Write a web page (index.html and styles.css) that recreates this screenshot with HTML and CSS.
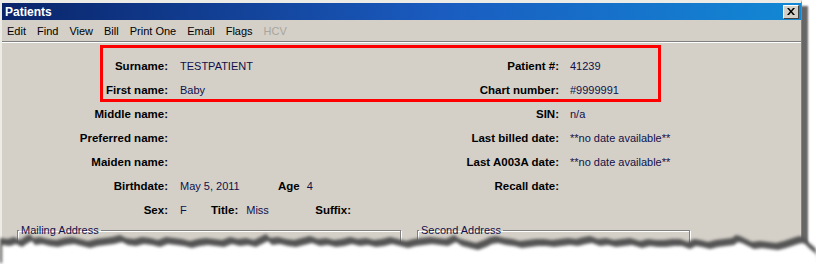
FILE: index.html
```html
<!DOCTYPE html>
<html lang="en">
<head>
    <meta charset="UTF-8">
    <title>Patients</title>
    <link rel="stylesheet" href="styles.css">
</head>
<body>
    <div class="window">
        <div class="titlebar">
            <span class="title">Patients</span>
            <span class="close">
                <svg width="8" height="7" viewBox="0 0 8 7"><path d="M0 0h2l2 2.5L6 0h2L5 3.5 8 7H6L4 4.5 2 7H0l3-3.5z" fill="#000"/></svg>
            </span>
        </div>
        <div class="menubar">
            <span>Edit</span>
            <span>Find</span>
            <span>View</span>
            <span>Bill</span>
            <span>Print One</span>
            <span>Email</span>
            <span>Flags</span>
            <span class="disabled">HCV</span>
        </div>
        <div class="content">
            <div class="fields">
                <span class="label">Surname:</span>
                <span class="value">TESTPATIENT</span>
                <span class="label">Patient #:</span>
                <span class="value right">41239</span>

                <span class="label">First name:</span>
                <span class="value">Baby</span>
                <span class="label">Chart number:</span>
                <span class="value right">#9999991</span>

                <span class="label">Middle name:</span>
                <span class="value"></span>
                <span class="label">SIN:</span>
                <span class="value right">n/a</span>

                <span class="label">Preferred name:</span>
                <span class="value"></span>
                <span class="label">Last billed date:</span>
                <span class="value right">**no date available**</span>

                <span class="label">Maiden name:</span>
                <span class="value"></span>
                <span class="label">Last A003A date:</span>
                <span class="value right">**no date available**</span>

                <span class="label">Birthdate:</span>
                <span class="value"><span class="birth">May 5, 2011</span><b>Age</b><span class="age">4</span></span>
                <span class="label">Recall date:</span>
                <span class="value right"></span>

                <span class="label">Sex:</span>
                <span class="value"><span class="sex">F</span><b>Title:</b><span class="miss">Miss</span><b>Suffix:</b></span>
                <span class="label"></span>
                <span class="value right"></span>
            </div>
            <div class="groups">
                <fieldset class="group mailing"><legend>Mailing Address</legend></fieldset>
                <fieldset class="group second"><legend>Second Address</legend></fieldset>
            </div>
        </div>
        <div class="highlight"></div>
    </div>

    <!-- torn paper edge -->
    <svg class="torn" width="816" height="264" viewBox="0 0 816 264">
        <defs>
            <filter id="soft" x="-5%" y="-50%" width="110%" height="200%">
                <feGaussianBlur stdDeviation="1.6"/>
            </filter>
            <path id="edge" d="M0 239L8 240L14 238L20 241L26 237L30 235L33 239L40 238L48 240L56 241L64 239L72 238L80 240L88 242L96 240L104 239L112 238L120 236L126 239L134 240L142 238L150 239L158 241L166 238L174 239L182 240L190 242L198 240L206 239L214 240L222 241L230 238L238 240L246 239L254 241L262 237L266 235L270 239L278 238L286 240L294 241L302 239L310 237L318 240L326 239L334 241L342 240L350 238L358 240L366 239L374 241L382 240L390 238L398 240L406 242L414 240L422 239L430 238L438 239L446 240L454 236L460 240L468 242L476 244L484 241L490 238L496 237L504 239L512 240L520 242L528 241L536 240L544 240L552 241L560 240L568 239L576 240L584 238L590 237L598 240L606 239L614 241L622 240L630 239L640 242L648 240L656 241L664 241L672 240L680 240L688 243L694 240L700 241L708 243L716 241L724 240L732 239L736 236L740 237L746 240L752 243L760 242L768 243L776 244L784 242L790 240L796 238L800 237L803 238L808 243L812 246L816 250L816 264L0 264Z"/>
        </defs>
        <use href="#edge" fill="#555555" filter="url(#soft)" transform="translate(0 -1)"/>
        <use href="#edge" fill="#ffffff" filter="url(#soft)" transform="translate(2 6)"/>
    </svg>
</body>
</html>
```

FILE: styles.css
```css
html, body {
    margin: 0;
    padding: 0;
    background-color: #fff;
    overflow: hidden;
}
body {
    width: 816px;
    height: 264px;
    position: relative;
    font-family: "Liberation Sans", Arial, sans-serif;
    font-size: 11px;
    color: #000;
}
.window {
    position: relative;
    width: 799px;
    height: 256px;
    overflow: hidden;
    border-top: 3px solid #ecebe6;
    border-left: 2px solid #ecebe6;
    border-right: 1px solid #808080;
    background-color: #d4d0c8;
    box-shadow: 6px 6px 2px #666;
}
.titlebar {
    height: 17px;
    display: flex;
    align-items: center;
    justify-content: space-between;
    padding: 0 2px 0 3px;
    background: linear-gradient(to right, #0a246a, #1a5cc0 55%, #1288d4);
}
.title {
    color: #fff;
    font-weight: bold;
    font-size: 12px;
}
.close {
    width: 14px;
    height: 12px;
    display: flex;
    align-items: center;
    justify-content: center;
    background-color: #d4d0c8;
    border-top: 1px solid #fff;
    border-left: 1px solid #fff;
    border-right: 1px solid #404040;
    border-bottom: 1px solid #404040;
}
.menubar {
    height: 21px;
    display: flex;
    align-items: center;
    gap: 11px;
    padding-left: 5px;
    border-bottom: 1px solid #808080;
    box-shadow: 0 1px 0 #fff;
}
.menubar .disabled {
    color: #a8a59c;
}
.content {
    padding-top: 12px;
}
.fields {
    display: grid;
    grid-template-columns: 166px 212px 179px 1fr;
    grid-auto-rows: 24px;
    align-items: center;
}
.label {
    text-align: right;
    font-weight: bold;
    font-size: 11.5px;
}
.value {
    padding-left: 12px;
    color: #10104a;
    display: flex;
    align-items: center;
}
.value.right {
    padding-left: 11px;
}
.value b {
    color: #000;
    font-size: 11.5px;
}
.birth {
    width: 98px;
}
.age {
    margin-left: 7px;
}
.sex {
    width: 31px;
}
.miss {
    width: 69px;
    margin-left: 8px;
}
.groups {
    display: flex;
    gap: 16px;
    padding-left: 15px;
    margin-top: 2px;
}
.group {
    margin: 0;
    padding: 0;
    height: 20px;
    border: 1px solid #808080;
    box-shadow: inset 1px 1px 0 #fff, 1px 1px 0 #fff;
}
.group legend {
    padding: 0 2px;
    margin-left: 1px;
    color: #10104a;
    font-size: 11px;
}
.mailing {
    width: 382px;
}
.second {
    width: 271px;
}
.highlight {
    position: absolute;
    left: 98px;
    top: 42px;
    width: 561px;
    height: 57px;
    box-sizing: border-box;
    border: 3px solid #f00;
}
.torn {
    position: absolute;
    left: 0;
    top: 0;
    pointer-events: none;
}
```
